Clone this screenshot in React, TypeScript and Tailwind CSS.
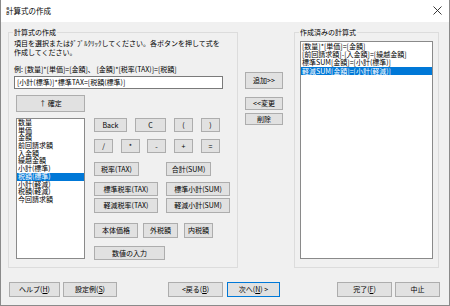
import React from 'react';

const Btn = ({ children, className = '' }: { children: React.ReactNode; className?: string }) => (
  <button
    className={`flex shrink-0 items-center justify-center border bg-[#e1e1e1] text-[7px] leading-none text-black whitespace-nowrap ${
      className.includes('border-[') ? '' : 'border-[#adadad]'
    } ${className}`}
  >
    {children}
  </button>
);

const leftItems = [
  '数量',
  '単価',
  '金額',
  '前回請求額',
  '入金額',
  '繰越金額',
  '小計(標準)',
  '税額(標準)',
  '小計(軽減)',
  '税額(軽減)',
  '今回請求額',
];

const rightItems = [
  '[数量]*[単価]=[金額]',
  '[前回請求額]-[入金額]=[繰越金額]',
  '標準SUM[金額]=[小計(標準)]',
  '軽減SUM[金額]=[小計(軽減)]',
];

export default function App() {
  return (
    <div className="w-[450px] h-[306px] flex flex-col border-x border-b border-[#8a8a8a] bg-white text-black font-['Noto_Sans_CJK_JP',sans-serif]">
      {/* Title bar */}
      <div className="h-[22px] shrink-0 flex items-center justify-between pl-[5px] pr-[7px] bg-white">
        <span className="text-[7.5px] leading-none">計算式の作成</span>
        <svg width="9" height="9" viewBox="0 0 9 9" className="mb-[2px]">
          <path d="M0.5 0.5 L8.5 8.5 M8.5 0.5 L0.5 8.5" stroke="#222" strokeWidth="0.9" />
        </svg>
      </div>

      {/* Body */}
      <div className="flex-1 flex flex-col bg-[#f0f0f0] pt-[6px] pl-[7px]">
        <div className="flex items-start">
          {/* Left group */}
          <fieldset className="w-[230px] h-[240px] shrink-0 border border-[#dcdcdc]">
            <legend className="ml-[4px] px-[1px] text-[7px] leading-[8px]">計算式の作成</legend>
            <div className="flex flex-col pl-[5px] pt-[3px] text-[7px]">
              <p className="leading-[9px] whitespace-nowrap">
                項目を選択またはﾀﾞﾌﾞﾙｸﾘｯｸしてください。各ボタンを押して式を
                <br />
                作成してください。
              </p>
              <p className="mt-[8px] leading-[9px] whitespace-nowrap">
                例: [数量]*[単価]=[金額]、 [金額]*[税率(TAX)]=[税額]
              </p>
              <div className="mt-[2px] w-[209px] h-[13px] flex items-center pl-[2px] border border-[#7a7a7a] bg-white leading-none whitespace-nowrap">
                [小計(標準)]*標準TAX=[税額(標準)]
              </div>
              <Btn className="mt-[6px] ml-[2px] w-[69px] h-[17px]">↑ 確定</Btn>

              <div className="flex mt-[6px] ml-[2px]">
                {/* Item list */}
                <div className="w-[69px] h-[141px] shrink-0 border border-[#8a8a8a] bg-white">
                  {leftItems.map((item, i) => (
                    <div
                      key={item}
                      className={`h-[7.7px] leading-[7.7px] pl-[1px] whitespace-nowrap ${
                        i === 7 ? 'bg-[#0078d7] text-white' : ''
                      }`}
                    >
                      {item}
                    </div>
                  ))}
                </div>

                {/* Operator buttons */}
                <div className="flex flex-col ml-[9px]">
                  <div className="flex h-[14px]">
                    <Btn className="w-[33px]">Back</Btn>
                    <Btn className="ml-[8px] w-[31px]">C</Btn>
                    <Btn className="ml-[8px] w-[19px]">(</Btn>
                    <Btn className="ml-[8px] w-[19px]">)</Btn>
                  </div>
                  <div className="flex h-[14px] mt-[7px]">
                    <Btn className="w-[19px]">/</Btn>
                    <Btn className="ml-[8px] w-[19px]">*</Btn>
                    <Btn className="ml-[7px] w-[19px]">-</Btn>
                    <Btn className="ml-[8px] w-[19px]">+</Btn>
                    <Btn className="ml-[8px] w-[19px]">=</Btn>
                  </div>
                  <div className="flex h-[14px] mt-[9px]">
                    <Btn className="w-[45px]">税率(TAX)</Btn>
                    <Btn className="ml-[27px] w-[45px]">合計(SUM)</Btn>
                  </div>
                  <div className="flex h-[14px] mt-[6px]">
                    <Btn className="w-[64px]">標準税率(TAX)</Btn>
                    <Btn className="ml-[8px] w-[64px]">標準小計(SUM)</Btn>
                  </div>
                  <div className="flex h-[15px] mt-[2px]">
                    <Btn className="w-[64px]">軽減税率(TAX)</Btn>
                    <Btn className="ml-[8px] w-[64px]">軽減小計(SUM)</Btn>
                  </div>
                  <div className="flex h-[15px] mt-[10px]">
                    <Btn className="w-[44px]">本体価格</Btn>
                    <Btn className="ml-[5px] w-[35px]">外税額</Btn>
                    <Btn className="ml-[6px] w-[29px]">内税額</Btn>
                  </div>
                  <div className="flex h-[14px] mt-[8px]">
                    <Btn className="w-[71px]">数値の入力</Btn>
                  </div>
                </div>
              </div>
            </div>
          </fieldset>

          {/* Middle buttons */}
          <div className="flex flex-col ml-[7px] mt-[44px] w-[38px]">
            <Btn className="h-[17px] w-[38px]">追加&gt;&gt;</Btn>
            <Btn className="mt-[8px] h-[13px] w-[38px]">&lt;&lt;変更</Btn>
            <Btn className="mt-[3px] h-[12px] w-[38px]">削除</Btn>
          </div>

          {/* Right group */}
          <fieldset className="ml-[11px] w-[145px] h-[240px] shrink-0 border border-[#dcdcdc]">
            <legend className="ml-[4px] px-[1px] text-[7px] leading-[8px]">作成済みの計算式</legend>
            <div className="pl-[5px] pt-[5px] text-[7px]">
              <div className="w-[133px] h-[218px] border border-[#8a8a8a] bg-white">
                {rightItems.map((item, i) => (
                  <div
                    key={item}
                    className={`h-[8.2px] leading-[8.2px] pl-[1px] whitespace-nowrap ${
                      i === 3 ? 'bg-[#0078d7] text-white' : ''
                    }`}
                  >
                    {item}
                  </div>
                ))}
              </div>
            </div>
          </fieldset>
        </div>

        {/* Bottom buttons */}
        <div className="flex mt-[14px] h-[15px]">
          <Btn className="ml-[1px] w-[51px]">
            ヘルプ(<span className="underline">H</span>)
          </Btn>
          <Btn className="ml-[3px] w-[54px]">
            設定例(<span className="underline">S</span>)
          </Btn>
          <Btn className="ml-[51px] w-[55px]">
            &lt;戻る(<span className="underline">B</span>)
          </Btn>
          <Btn className="ml-[4px] w-[53px] border-[#0078d7]">
            次へ(<span className="underline">N</span>) &gt;
          </Btn>
          <Btn className="ml-[57px] w-[55px]">
            完了(<span className="underline">F</span>)
          </Btn>
          <Btn className="ml-[3px] w-[45px]">中止</Btn>
        </div>
      </div>
    </div>
  );
}
